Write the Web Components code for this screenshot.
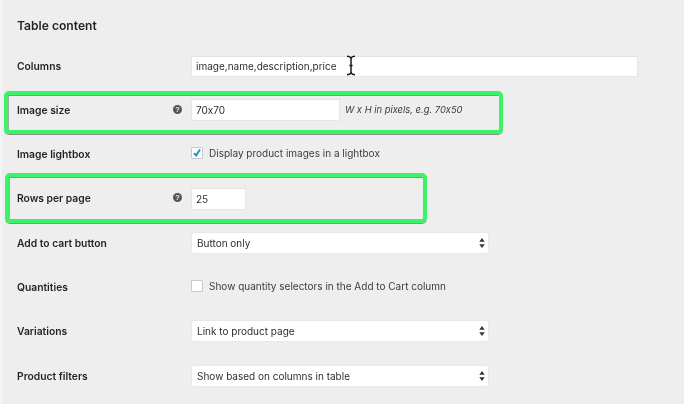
<!DOCTYPE html>
<html>
<head>
<meta charset="utf-8">
<style>
  html, body { margin: 0; padding: 0; width: 684px; height: 404px; overflow: hidden; background: #eeeeee; }
  body { font-family: Inter, "Liberation Sans", sans-serif; font-feature-settings: "calt" 0; }
</style>
</head>
<body>
<settings-page>
  <settings-row label="Columns"><text-field value="image,name,description,price" width="447" height="21"></text-field></settings-row>
  <settings-row label="Image size" help><text-field value="70x70" width="149" height="22"></text-field><em class="hint" slot="after">W x H in pixels, e.g. 70x50</em></settings-row>
  <settings-row label="Image lightbox" nudge><check-field checked>Display product images in a lightbox</check-field></settings-row>
  <settings-row label="Rows per page" help nudge><text-field value="25" width="55" height="22"></text-field></settings-row>
  <settings-row label="Add to cart button"><select-field value="Button only"></select-field></settings-row>
  <settings-row label="Quantities"><check-field>Show quantity selectors in the Add to Cart column</check-field></settings-row>
  <settings-row label="Variations"><select-field value="Link to product page"></select-field></settings-row>
  <settings-row label="Product filters"><select-field value="Show based on columns in table"></select-field></settings-row>
</settings-page>

<script>
  class SettingsPage extends HTMLElement {
    constructor() {
      super();
      this.attachShadow({ mode: 'open' });
      this.shadowRoot.innerHTML = `
        <style>
          :host {
            display: block;
            position: relative;
            width: 684px;
            height: 404px;
            box-sizing: border-box;
            padding: 44.1px 0 0 0;
            background: #eeeeee;
            color: #23282d;
            filter: blur(0.35px);
          }
          .edge {
            position: absolute;
            left: 0; top: 0; bottom: 0;
            width: 2px;
            background: #f4f4f4;
          }
          h2 {
            position: absolute;
            left: 17px;
            top: 18px;
            margin: 0;
            font-size: 12.1px;
            line-height: 16px;
            font-weight: 600;
            color: #1f2327;
          }
          .mark {
            position: absolute;
            box-sizing: border-box;
            border: 4px solid #39f464;
            border-radius: 5px;
            box-shadow: inset 0 1px 0 #8b938d, inset 1px 0 0 #a3aaa5, 0 1px 0 #8a8f8b;
          }
          .cursor { position: absolute; left: 345px; top: 55px; }
        </style>
        <div class="edge"></div>
        <h2>Table content</h2>
        <slot></slot>
        <div class="mark" style="left:4px;top:91px;width:499px;height:43px"></div>
        <div class="mark" style="left:5px;top:173px;width:422px;height:50px"></div>
        <svg class="cursor" width="12" height="21" viewBox="0 0 12 21" fill="none" stroke="#1c1c1c">
          <path d="M2 1.2c2 0 3.2.6 4 1.8.8-1.2 2-1.8 4-1.8M2 19.8c2 0 3.2-.6 4-1.8.8 1.2 2 1.8 4 1.8" stroke-width="1.4"/>
          <path d="M6 3v15M4.4 10.5h3.2" stroke-width="1.5"/>
        </svg>
      `;
    }
  }

  class SettingsRow extends HTMLElement {
    constructor() {
      super();
      this.attachShadow({ mode: 'open' });
    }
    connectedCallback() {
      const help = this.hasAttribute('help');
      const nudge = this.hasAttribute('nudge');
      this.shadowRoot.innerHTML = `
        <style>
          :host {
            display: grid;
            grid-template-columns: 191px auto 1fr;
            align-items: center;
            height: 44.2px;
          }
          .label {
            display: flex;
            align-items: center;
            justify-content: space-between;
            padding: 0 9px 0 17px;
            margin-top: ${nudge ? '-2px' : '0'};
            font-size: 10.3px;
            font-weight: 600;
            color: #1f2327;
          }
          .help { width: 9px; height: 9px; margin-top: -1px; }
          ::slotted(.hint) {
            display: block;
            margin: -1px 0 0 5px;
            font-size: 9.4px;
            font-style: italic;
            color: #3c3c3c;
          }
        </style>
        <div class="label">
          <span>${this.getAttribute('label')}</span>
          ${help ? `<svg class="help" viewBox="0 0 9 9"><circle cx="4.5" cy="4.5" r="4.5" fill="#555"/><text x="4.5" y="7.4" text-anchor="middle" font-size="7.5" font-weight="700" font-family="Liberation Sans" fill="#eee">?</text></svg>` : ''}
        </div>
        <div><slot></slot></div>
        <div><slot name="after"></slot></div>
      `;
    }
  }

  class TextField extends HTMLElement {
    constructor() {
      super();
      this.attachShadow({ mode: 'open' });
    }
    connectedCallback() {
      const h = this.getAttribute('height');
      this.shadowRoot.innerHTML = `
        <style>
          :host {
            display: block;
            box-sizing: border-box;
            width: ${this.getAttribute('width')}px;
            height: ${h}px;
            padding-left: 4px;
            background: #fff;
            border: 1px solid #e6e6e6;
            border-top-color: #e2e2e2;
            font-size: 10px;
            line-height: ${h - 2}px;
            color: #2b2f33;
          }
        </style>
        ${this.getAttribute('value')}
      `;
    }
  }

  class CheckField extends HTMLElement {
    constructor() {
      super();
      this.attachShadow({ mode: 'open' });
    }
    connectedCallback() {
      const checked = this.hasAttribute('checked');
      this.shadowRoot.innerHTML = `
        <style>
          :host {
            display: flex;
            align-items: center;
            gap: 5px;
            font-size: 10px;
            color: #3c3c3c;
          }
          .box {
            position: relative;
            box-sizing: border-box;
            width: 12px;
            height: 12px;
            background: #fff;
            border: 1px solid #c9c9c9;
            border-radius: 1px;
            margin-top: -3px;
          }
          svg { position: absolute; left: -1px; top: -1px; }
          span { margin-top: -3px; margin-left: 1px; }
        </style>
        <div class="box">${checked ? `<svg width="12" height="12" viewBox="0 0 12 12"><path d="M3 6.2l2.1 2.3L9 2.6" fill="none" stroke="#1e8cbe" stroke-width="1.9"/></svg>` : ''}</div>
        <span><slot></slot></span>
      `;
    }
  }

  class SelectField extends HTMLElement {
    constructor() {
      super();
      this.attachShadow({ mode: 'open' });
    }
    connectedCallback() {
      this.shadowRoot.innerHTML = `
        <style>
          :host {
            display: flex;
            align-items: center;
            justify-content: space-between;
            box-sizing: border-box;
            width: 298px;
            height: 22px;
            padding: 0 3px 0 5px;
            background: #fff;
            border: 1px solid #e8e8e8;
            border-radius: 3px;
            font-size: 10px;
            color: #2b2f33;
          }
        </style>
        <span>${this.getAttribute('value')}</span>
        <svg width="6" height="10" viewBox="0 0 6 10"><path d="M3 0l2.7 3.8H.3zM3 10L.3 6.2h5.4z" fill="#333"/></svg>
      `;
    }
  }

  customElements.define('settings-page', SettingsPage);
  customElements.define('settings-row', SettingsRow);
  customElements.define('text-field', TextField);
  customElements.define('check-field', CheckField);
  customElements.define('select-field', SelectField);
</script>
</body>
</html>
